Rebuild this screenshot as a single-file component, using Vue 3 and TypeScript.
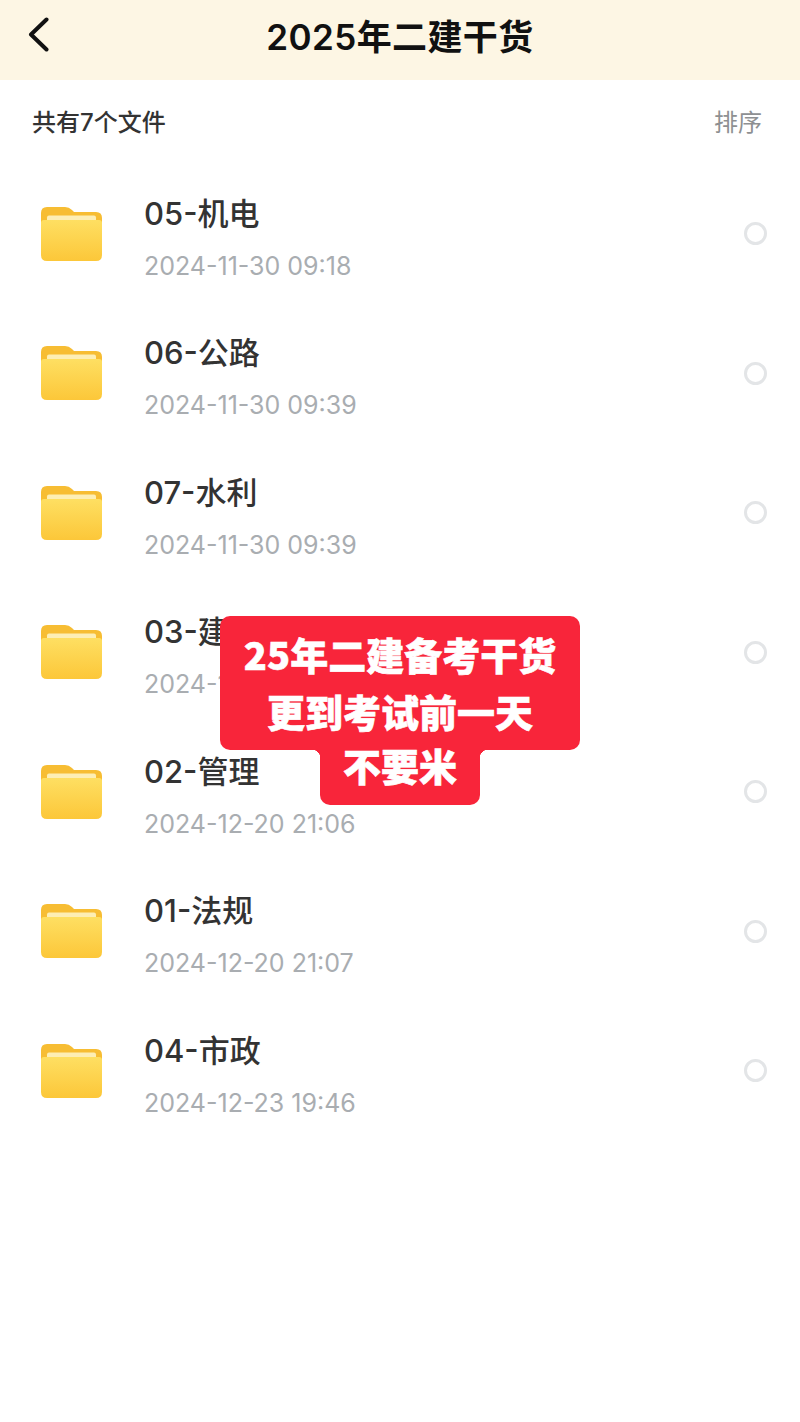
<script setup lang="ts">
interface FileRow {
  name: string;
  time: string;
}

const files: FileRow[] = [
  { name: "05-机电", time: "2024-11-30 09:18" },
  { name: "06-公路", time: "2024-11-30 09:39" },
  { name: "07-水利", time: "2024-11-30 09:39" },
  { name: "03-建筑", time: "2024-12-20 21:06" },
  { name: "02-管理", time: "2024-12-20 21:06" },
  { name: "01-法规", time: "2024-12-20 21:07" },
  { name: "04-市政", time: "2024-12-23 19:46" },
];
</script>

<template>
  <div class="page" lang="zh-CN">
    <header class="topbar">
      <svg class="back" width="24" height="36" viewBox="0 0 24 36" fill="none">
        <path d="M19.500 2.500 L4 17.500 L19.500 32.500" stroke="#111" stroke-width="4" stroke-linecap="round" stroke-linejoin="round" />
      </svg>
      <h1 class="title">2025年二建干货</h1>
    </header>

    <div class="toolbar">
      <span class="count">共有7个文件</span>
      <span class="sort">排序</span>
    </div>

    <ul class="list">
      <li v-for="file in files" :key="file.name" class="row">
        <svg class="folder" width="61" height="54" viewBox="0 0 61 54">
          <defs>
            <linearGradient id="folderBody" x1="0" y1="0" x2="0" y2="1">
              <stop offset="0" stop-color="#fedf62" />
              <stop offset="1" stop-color="#fcc739" />
            </linearGradient>
          </defs>
          <path d="M0 6 Q0 0 6 0 H24 Q28 0 31 3 L33 5 H55 Q61 5 61 11 V30 H0 Z" fill="#f7bd33" />
          <rect x="6" y="8.500" width="49" height="8" rx="2" fill="#fdeeb4" />
          <path d="M0 16 Q0 13 3 13 H58 Q61 13 61 16 V48 Q61 54 55 54 H6 Q0 54 0 48 Z" fill="url(#folderBody)" />
        </svg>
        <div class="info">
          <div class="name">{{ file.name }}</div>
          <div class="time">{{ file.time }}</div>
        </div>
        <span class="radio"></span>
      </li>
    </ul>

    <div class="sticker">
      <div class="sticker-top">
        <div class="line">25年二建备考干货</div>
        <div class="line">更到考试前一天</div>
      </div>
      <div class="sticker-bottom">
        <div class="line">不要米</div>
      </div>
    </div>
  </div>
</template>

<style scoped>
.page {
  position: relative;
  width: 800px;
  height: 1422px;
  background: #fff;
  overflow: hidden;
  font-family: "Inter", "Noto Sans CJK SC", sans-serif;
}

.topbar {
  position: relative;
  height: 80px;
  background: #fdf6e4;
  display: flex;
  align-items: center;
  justify-content: center;
}

.back {
  position: absolute;
  left: 27px;
  top: 17px;
}

.title {
  margin: 0 0 7px;
  font-size: 35px;
  font-weight: 600;
  letter-spacing: 0.4px;
  line-height: 72px;
  color: #111;
}

.toolbar {
  height: 84px;
  padding: 0 38px 4px 32px;
  box-sizing: border-box;
  display: flex;
  align-items: center;
  justify-content: space-between;
}

.count {
  font-size: 24px;
  font-weight: 500;
  color: #333;
}

.sort {
  font-size: 24px;
  color: #8e9092;
}

.list {
  margin: 0;
  padding: 0;
  list-style: none;
}

.row {
  height: 139.5px;
  padding: 0 33px 0 41px;
  display: flex;
  align-items: center;
}

.folder {
  flex: none;
}

.info {
  flex: 1;
  margin-left: 42px;
  margin-top: 10px;
}

.name {
  font-size: 31px;
  font-weight: 500;
  line-height: 36px;
  color: #333;
}

.time {
  margin-top: 18px;
  font-size: 25px;
  line-height: 32px;
  color: #a9adb1;
}

.radio {
  flex: none;
  width: 17px;
  height: 17px;
  border: 3px solid #e3e5e7;
  border-radius: 50%;
}

.sticker {
  position: absolute;
  left: 220px;
  top: 616px;
  width: 360px;
  display: flex;
  flex-direction: column;
  align-items: center;
  color: #fff;
  font-family: "Noto Sans CJK SC", sans-serif;
  font-weight: 900;
  font-size: 38px;
  -webkit-text-stroke: 0.6px #fff;
  text-align: center;
}

.sticker-top {
  width: 360px;
  height: 134px;
  padding-top: 9px;
  box-sizing: border-box;
  background: #f8253a;
  border-radius: 10px;
}

.sticker-bottom {
  position: relative;
  width: 160px;
  height: 55px;
  background: #f8253a;
  border-radius: 0 0 10px 10px;
}

.sticker-bottom::before,
.sticker-bottom::after {
  content: "";
  position: absolute;
  top: 0;
  width: 8px;
  height: 8px;
}

.sticker-bottom::before {
  left: -8px;
  background: radial-gradient(circle at 0 100%, transparent 8px, #f8253a 8.500px);
}

.sticker-bottom::after {
  right: -8px;
  background: radial-gradient(circle at 100% 100%, transparent 8px, #f8253a 8.500px);
}

.line {
  line-height: 57px;
  white-space: nowrap;
}

.sticker-bottom .line {
  margin-top: -14px;
}
</style>

<style>
html,
body {
  margin: 0;
  background: #fff;
}
</style>
